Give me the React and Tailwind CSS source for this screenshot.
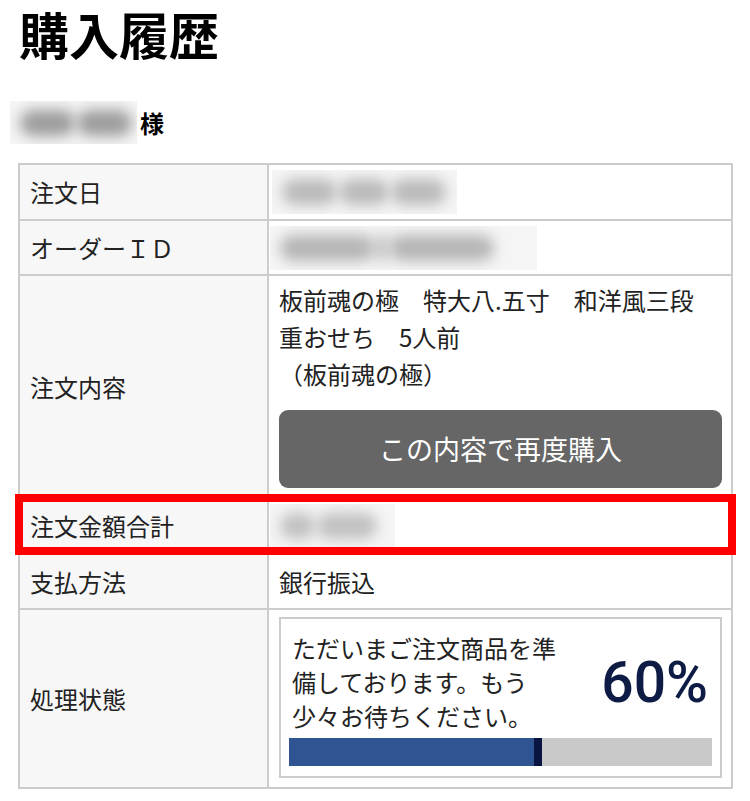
import React from 'react';

const jp = "font-['Noto_Sans_CJK_JP','Noto_Sans',sans-serif]";

const Blur = ({ className, blobs, tone = 'bg-[#b9b9b9]' }) => (
  <div className={`flex items-center gap-[2px] overflow-hidden bg-[#f5f5f5] px-[10px] ${className}`}>
    {blobs.map((w, i) => (
      <span key={i} className={`h-[26px] shrink-0 rounded-full blur-[7px] ${tone}`} style={{ width: w }} />
    ))}
  </div>
);

const Label = ({ children }) => (
  <div className="flex w-[249px] shrink-0 items-center border-r-2 border-[#cccccc] bg-[#f7f7f7] pl-[10px] text-[24px] text-[#222]">
    {children}
  </div>
);

export default function App() {
  return (
    <div className={`${jp} min-h-[801px] w-[750px] bg-white text-[#222]`}>
      <div className="pl-[19px] pt-[2px] text-[50px] font-bold leading-[62px] text-black">購入履歴</div>

      <div className="mt-[37px] flex items-center">
        <Blur className="ml-[10px] h-[43px] w-[127px] px-[8px]" blobs={[55, 55]} tone="bg-[#9c9c9c]" />
        <span className="ml-[3px] text-[24px] font-bold text-black">様</span>
      </div>

      <div className="ml-[18px] mt-[19px] w-[715px] border-2 border-[#cccccc]">
        <div className="flex h-[54px]">
          <Label>注文日</Label>
          <div className="flex flex-1 items-center pl-[3px]">
            <Blur className="h-[44px] w-[185px]" blobs={[55, 50, 55]} />
          </div>
        </div>

        <div className="flex h-[55px] border-t-2 border-[#cccccc]">
          <Label>オーダーＩＤ</Label>
          <div className="flex flex-1 items-center pl-[1px]">
            <Blur className="h-[44px] w-[267px]" blobs={[95, 10, 105]} tone="bg-[#b5b5b5]" />
          </div>
        </div>

        <div className="flex border-t-2 border-[#cccccc]">
          <Label>注文内容</Label>
          <div className="flex-1 pb-[9px] pl-[10px] pr-[9px] pt-[5px]">
            <p className="text-[24px] leading-[37px]">
              板前魂の極　特大八.五寸　和洋風三段
              <br />
              重おせち　5人前
              <br />
              （板前魂の極）
            </p>
            <button className="mt-[18px] flex h-[78px] w-full items-center justify-center rounded-[9px] bg-[#666666] text-[27px] text-white">
              この内容で再度購入
            </button>
          </div>
        </div>

        <div className="relative flex h-[56px] border-t-2 border-[#cccccc]">
          <Label>注文金額合計</Label>
          <div className="flex flex-1 items-center pl-[1px]">
            <Blur className="h-[45px] w-[125px]" blobs={[35, 60]} tone="bg-[#c0c0c0]" />
          </div>
          <span className="pointer-events-none absolute -bottom-[2px] -left-[5px] -right-[5px] -top-[5px] z-10 border-[8px] border-[#ff0000]" />
        </div>

        <div className="flex h-[55px] border-t-2 border-[#cccccc]">
          <Label>支払方法</Label>
          <div className="flex flex-1 items-center pl-[10px] text-[24px]">銀行振込</div>
        </div>

        <div className="flex border-t-2 border-[#cccccc]">
          <Label>処理状態</Label>
          <div className="flex-1 pb-[9px] pl-[10px] pr-[9px] pt-[7px]">
            <div className="border-2 border-[#cccccc] px-[8px] pb-[10px] pt-[12px]">
              <div className="flex items-center justify-between">
                <p className="pl-[3px] text-[24px] leading-[34px] text-[#222]">
                  ただいまご注文商品を準
                  <br />
                  備しております。もう
                  <br />
                  少々お待ちください。
                </p>
                <span className="pr-[4px] font-['Roboto',Arial,sans-serif] text-[57px] font-medium leading-none text-[#0d1b45]">
                  60%
                </span>
              </div>
              <div className="mt-[5px] flex h-[28px] bg-[#c9c9c9]">
                <div className="w-[245px] bg-[#2e5591]" />
                <div className="w-[8px] bg-[#0a1440]" />
              </div>
            </div>
          </div>
        </div>
      </div>
    </div>
  );
}
